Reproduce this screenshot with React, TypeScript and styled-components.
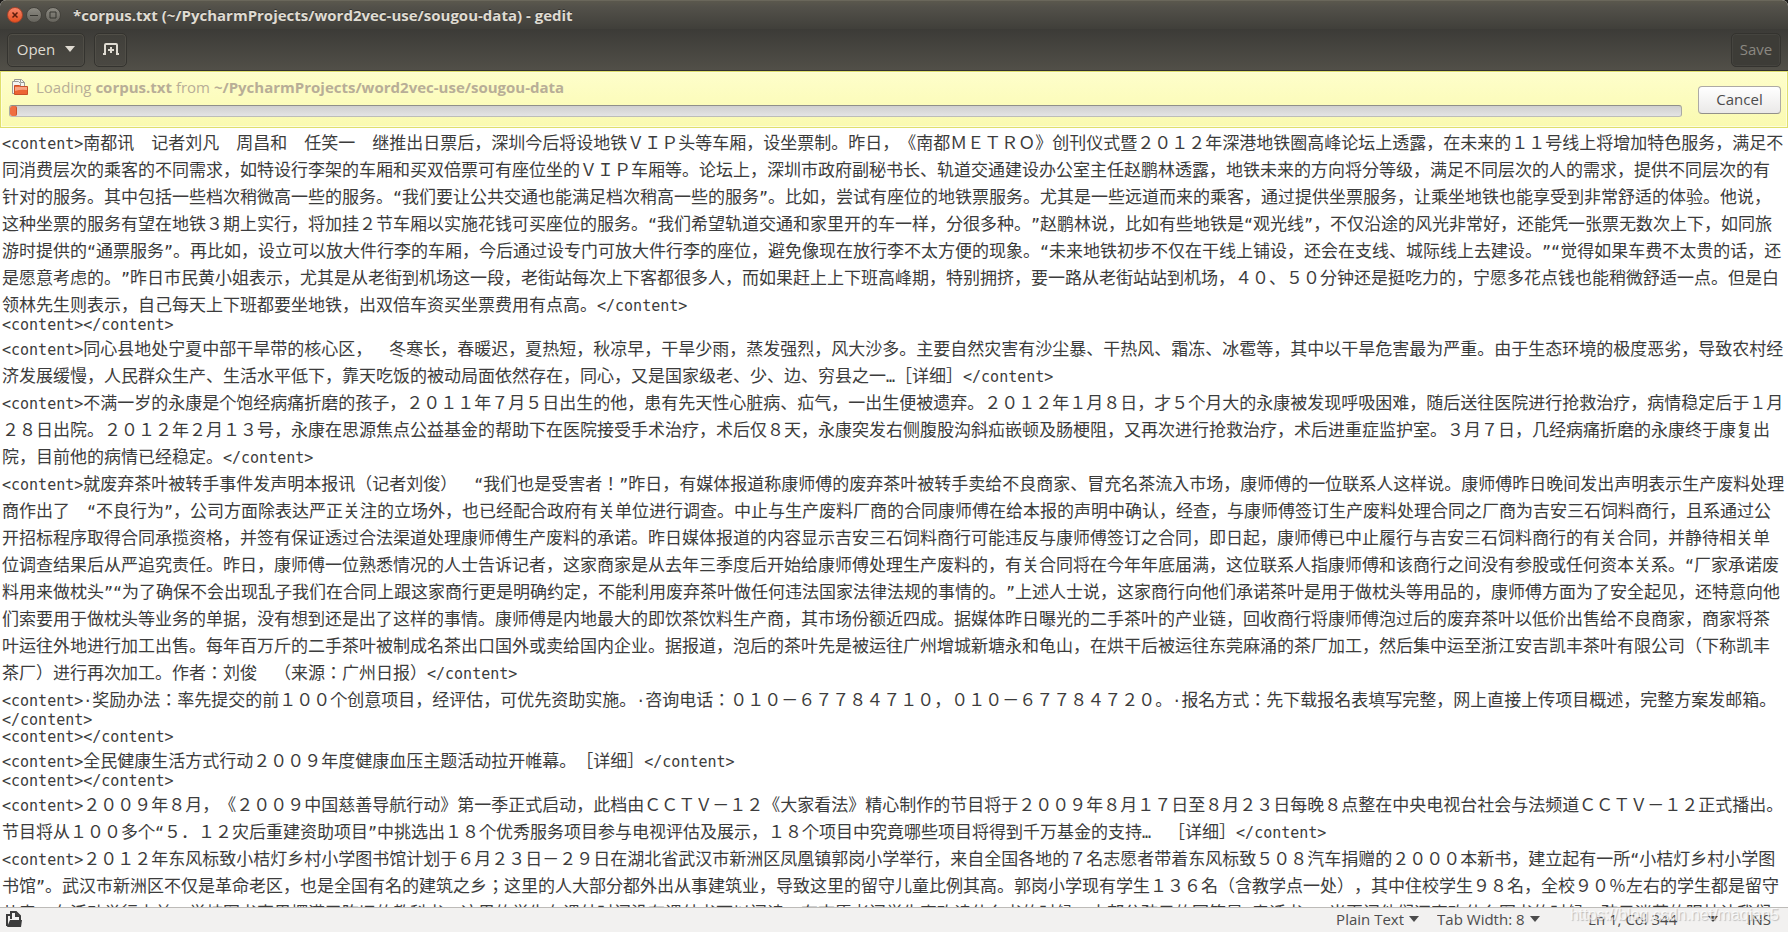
import React from "react";
import styled, { createGlobalStyle } from "styled-components";

const UI_FONT = `"Open Sans", "Noto Sans", sans-serif`;

const GlobalStyle = createGlobalStyle`
  *, *::before, *::after { box-sizing: border-box; }
  body { margin: 0; background: #1a1917; }
  button, select { font: inherit; color: inherit; margin: 0; }
`;

const Window = styled.div`
  display: flex;
  flex-direction: column;
  height: 100vh;
  overflow: hidden;
  border-radius: 6px 6px 0 0;
  background: #fff;
  font-family: ${UI_FONT};
  font-size: 15px;
  line-height: 20px;
`;

const TitleBar = styled.header`
  display: flex;
  flex: none;
  align-items: center;
  gap: 12px;
  height: 29px;
  padding: 0 7px 1px;
  background: linear-gradient(#5b584d, #53514a 20%, #403f3a);
  border-top: 1px solid #6a675b;
`;

const WindowControls = styled.div`
  display: flex;
  gap: 3px;
`;

const ControlButton = styled.button<{ $tone: "close" | "plain" }>`
  display: flex;
  align-items: center;
  justify-content: center;
  width: 16px;
  height: 16px;
  padding: 0;
  border: 1px solid ${(p) => (p.$tone === "close" ? "#a8432a" : "#44423c")};
  border-radius: 50%;
  color: ${(p) => (p.$tone === "close" ? "#5c1d0c" : "#35342f")};
  background: ${(p) =>
    p.$tone === "close"
      ? "linear-gradient(#f6856a, #e6501f)"
      : "linear-gradient(#8c8a82, #66645d)"};
`;

const Title = styled.h1`
  margin: 0;
  font-size: 15px;
  line-height: 20px;
  font-weight: 700;
  color: #dfdbd2;
  text-shadow: 0 -1px 0 #33322e;
`;

const Toolbar = styled.div`
  display: flex;
  flex: none;
  align-items: center;
  gap: 9px;
  height: 42px;
  padding: 0 7px;
  color: #dfdbd2;
  background: linear-gradient(#3c3b37, #514f48);
  border-bottom: 1px solid #33322e;
`;

const ToolButton = styled.button<{ $width: number }>`
  display: flex;
  align-items: center;
  justify-content: center;
  gap: 10px;
  width: ${(p) => p.$width}px;
  height: 34px;
  padding: 0 0 2px;
  border: 1px solid #34332f;
  border-radius: 5px;
  background: linear-gradient(#403f3a, #4a4842);
  box-shadow: inset 0 0 0 1px #504e47;

  &:disabled {
    color: #8b8881;
    background: #3d3c37;
    box-shadow: inset 0 0 0 1px #45443f;
  }
`;

const Spacer = styled.span`
  flex: 1;
`;

const InfoBar = styled.section`
  display: flex;
  flex: none;
  align-items: center;
  gap: 16px;
  height: 57px;
  padding: 0 6px 0 8px;
  border: 1px solid #dfdf6c;
  background: linear-gradient(#fefecb, #fafab0);
  box-shadow: inset 0 0 0 1px #fdfddc;
`;

const Loading = styled.div`
  display: flex;
  flex: 1;
  flex-direction: column;
  align-self: flex-start;
  gap: 8px;
  padding-top: 5px;
`;

const LoadingLabel = styled.label`
  display: flex;
  align-items: center;
  gap: 8px;
  padding-left: 3px;
  color: #b8ae97;
  white-space: pre;
`;

const ProgressTrack = styled.progress`
  display: block;
  appearance: none;
  width: 100%;
  height: 12px;
  border: 1px solid #a9a9a4;
  border-color: #8f8f8b #a9a9a4 #bdbdb8;
  border-radius: 3px;
  overflow: hidden;
  background: linear-gradient(#cfcfcf, #e4e4e4);

  &::-webkit-progress-bar {
    background: transparent;
  }

  &::-webkit-progress-value {
    background: #ef6f42;
    border-right: 1px solid #c9502a;
    border-radius: 2px;
  }
`;

const CancelButton = styled.button`
  width: 83px;
  height: 28px;
  padding: 0 0 2px;
  border: 1px solid #adaaa5;
  border-bottom-color: #92908b;
  border-radius: 4px;
  color: #4c4c4c;
  background: linear-gradient(#fff, #eae9e8);
`;

const Editor = styled.main`
  flex: 1;
  min-height: 0;
  overflow: hidden;
  padding: 0 2px;
  color: #3c3c3c;
  font-family: "DejaVu Sans Mono", monospace;
  font-size: 15px;
  line-height: 17px;
  text-spacing-trim: space-all;
  outline: none;
`;

const Line = styled.p`
  margin: 0;
  white-space: pre-wrap;
`;

const Han = styled.span`
  font-family: "Noto Sans CJK JP", sans-serif;
  font-size: 17px;
  line-height: 27px;
`;

const StatusBar = styled.footer`
  position: relative;
  display: flex;
  flex: none;
  align-items: center;
  height: 25px;
  padding: 0 17px 2px 6px;
  border-top: 1px solid #bdbbb8;
  color: #4c4c4c;
  background: #f2f1f0;
`;

const StatusButton = styled.button`
  display: flex;
  align-items: center;
  padding: 0;
  border: 0;
  background: none;
`;

const StatusGroup = styled.div`
  display: flex;
  align-items: center;
`;

const Picker = styled.label`
  display: flex;
  align-items: center;
  gap: 5px;
  margin-right: 18px;
`;

const PickerSelect = styled.select`
  appearance: none;
  padding: 0;
  border: 0;
  background: none;
  outline: none;
`;

const Position = styled(StatusButton)`
  gap: 31px;
  margin-left: 30px;
  margin-right: 29px;
`;

const Watermark = styled.span`
  position: absolute;
  right: 9px;
  bottom: 8px;
  font-family: "Liberation Sans", sans-serif;
  font-size: 16px;
  line-height: 18px;
  color: rgba(255, 255, 255, 0.75);
  text-shadow: 1px 1px 1px rgba(0, 0, 0, 0.22);
  pointer-events: none;
`;

const Arrow = () => (
  <svg width="10" height="6" viewBox="0 0 10 6" aria-hidden="true">
    <path d="M0 0h10L5 6z" fill="currentColor" />
  </svg>
);

const NewTabIcon = () => (
  <svg width="16" height="12" viewBox="0 0 16 12" fill="none" stroke="currentColor" strokeWidth="2" aria-hidden="true">
    <path d="M0 11h2V2q0-1 1-1h10q1 0 1 1v9h2" />
    <path d="M8 4v6M5 7h6" />
  </svg>
);

const FolderIcon = () => (
  <svg width="16" height="16" viewBox="0 0 16 16" aria-hidden="true">
    <path d="M.5 14.500v-12h2v-2h7l3 3v4h-9v7z" fill="#f4f4f2" stroke="#9a9a95" />
    <path d="M2.500 2.500h4l2 2v3M8.500.5v3h4" fill="none" stroke="#9a9a95" />
    <path d="M2.500 15.500v-9h5l1 1h7v8z" fill="#ec6434" stroke="#c9502a" />
    <path d="M3 8h12v3q-6-1-12 1z" fill="#f8a483" />
  </svg>
);

const PanelIcon = () => (
  <svg width="16" height="16" viewBox="0 0 16 16" aria-hidden="true">
    <path d="M1 15V4h3" fill="none" stroke="#3c3c3c" strokeWidth="2" />
    <path d="M5 8V1h5l4 4v4" fill="none" stroke="#3c3c3c" strokeWidth="2" />
    <path d="M9 1v5h5z" fill="#3c3c3c" />
    <path d="M4 9h12l-1 7H1z" fill="#3c3c3c" />
  </svg>
);

const documentLines = [
  "<content>南都讯　记者刘凡　周昌和　任笑一　继推出日票后，深圳今后将设地铁ＶＩＰ头等车厢，设坐票制。昨日，《南都ＭＥＴＲＯ》创刊仪式暨２０１２年深港地铁圈高峰论坛上透露，在未来的１１号线上将增加特色服务，满足不同消费层次的乘客的不同需求，如特设行李架的车厢和买双倍票可有座位坐的ＶＩＰ车厢等。论坛上，深圳市政府副秘书长、轨道交通建设办公室主任赵鹏林透露，地铁未来的方向将分等级，满足不同层次的人的需求，提供不同层次的有针对的服务。其中包括一些档次稍微高一些的服务。“我们要让公共交通也能满足档次稍高一些的服务”。比如，尝试有座位的地铁票服务。尤其是一些远道而来的乘客，通过提供坐票服务，让乘坐地铁也能享受到非常舒适的体验。他说，这种坐票的服务有望在地铁３期上实行，将加挂２节车厢以实施花钱可买座位的服务。“我们希望轨道交通和家里开的车一样，分很多种。”赵鹏林说，比如有些地铁是“观光线”，不仅沿途的风光非常好，还能凭一张票无数次上下，如同旅游时提供的“通票服务”。再比如，设立可以放大件行李的车厢，今后通过设专门可放大件行李的座位，避免像现在放行李不太方便的现象。“未来地铁初步不仅在干线上铺设，还会在支线、城际线上去建设。”“觉得如果车费不太贵的话，还是愿意考虑的。”昨日市民黄小姐表示，尤其是从老街到机场这一段，老街站每次上下客都很多人，而如果赶上上下班高峰期，特别拥挤，要一路从老街站站到机场，４０、５０分钟还是挺吃力的，宁愿多花点钱也能稍微舒适一点。但是白领林先生则表示，自己每天上下班都要坐地铁，出双倍车资买坐票费用有点高。</content>",
  "<content></content>",
  "<content>同心县地处宁夏中部干旱带的核心区，　冬寒长，春暖迟，夏热短，秋凉早，干旱少雨，蒸发强烈，风大沙多。主要自然灾害有沙尘暴、干热风、霜冻、冰雹等，其中以干旱危害最为严重。由于生态环境的极度恶劣，导致农村经济发展缓慢，人民群众生产、生活水平低下，靠天吃饭的被动局面依然存在，同心，又是国家级老、少、边、穷县之一…［详细］</content>",
  "<content>不满一岁的永康是个饱经病痛折磨的孩子，２０１１年７月５日出生的他，患有先天性心脏病、疝气，一出生便被遗弃。２０１２年１月８日，才５个月大的永康被发现呼吸困难，随后送往医院进行抢救治疗，病情稳定后于１月２８日出院。２０１２年２月１３号，永康在思源焦点公益基金的帮助下在医院接受手术治疗，术后仅８天，永康突发右侧腹股沟斜疝嵌顿及肠梗阻，又再次进行抢救治疗，术后进重症监护室。３月７日，几经病痛折磨的永康终于康复出院，目前他的病情已经稳定。</content>",
  "<content>就废弃茶叶被转手事件发声明本报讯（记者刘俊）　“我们也是受害者！”昨日，有媒体报道称康师傅的废弃茶叶被转手卖给不良商家、冒充名茶流入市场，康师傅的一位联系人这样说。康师傅昨日晚间发出声明表示生产废料处理商作出了　“不良行为”，公司方面除表达严正关注的立场外，也已经配合政府有关单位进行调查。中止与生产废料厂商的合同康师傅在给本报的声明中确认，经查，与康师傅签订生产废料处理合同之厂商为吉安三石饲料商行，且系通过公开招标程序取得合同承揽资格，并签有保证透过合法渠道处理康师傅生产废料的承诺。昨日媒体报道的内容显示吉安三石饲料商行可能违反与康师傅签订之合同，即日起，康师傅已中止履行与吉安三石饲料商行的有关合同，并静待相关单位调查结果后从严追究责任。昨日，康师傅一位熟悉情况的人士告诉记者，这家商家是从去年三季度后开始给康师傅处理生产废料的，有关合同将在今年年底届满，这位联系人指康师傅和该商行之间没有参股或任何资本关系。“厂家承诺废料用来做枕头”“为了确保不会出现乱子我们在合同上跟这家商行更是明确约定，不能利用废弃茶叶做任何违法国家法律法规的事情的。”上述人士说，这家商行向他们承诺茶叶是用于做枕头等用品的，康师傅方面为了安全起见，还特意向他们索要用于做枕头等业务的单据，没有想到还是出了这样的事情。康师傅是内地最大的即饮茶饮料生产商，其市场份额近四成。据媒体昨日曝光的二手茶叶的产业链，回收商行将康师傅泡过后的废弃茶叶以低价出售给不良商家，商家将茶叶运往外地进行加工出售。每年百万斤的二手茶叶被制成名茶出口国外或卖给国内企业。据报道，泡后的茶叶先是被运往广州增城新塘永和龟山，在烘干后被运往东莞麻涌的茶厂加工，然后集中运至浙江安吉凯丰茶叶有限公司（下称凯丰茶厂）进行再次加工。作者：刘俊　（来源：广州日报）</content>",
  "<content>·奖励办法：率先提交的前１００个创意项目，经评估，可优先资助实施。·咨询电话：０１０－６７７８４７１０，０１０－６７７８４７２０。·报名方式：先下载报名表填写完整，网上直接上传项目概述，完整方案发邮箱。</content>",
  "<content></content>",
  "<content>全民健康生活方式行动２００９年度健康血压主题活动拉开帷幕。［详细］</content>",
  "<content></content>",
  "<content>２００９年８月，《２００９中国慈善导航行动》第一季正式启动，此档由ＣＣＴＶ－１２《大家看法》精心制作的节目将于２００９年８月１７日至８月２３日每晚８点整在中央电视台社会与法频道ＣＣＴＶ－１２正式播出。节目将从１００多个“５．１２灾后重建资助项目”中挑选出１８个优秀服务项目参与电视评估及展示，１８个项目中究竟哪些项目将得到千万基金的支持…　［详细］</content>",
  "<content>２０１２年东风标致小桔灯乡村小学图书馆计划于６月２３日－２９日在湖北省武汉市新洲区凤凰镇郭岗小学举行，来自全国各地的７名志愿者带着东风标致５０８汽车捐赠的２０００本新书，建立起有一所“小桔灯乡村小学图书馆”。武汉市新洲区不仅是革命老区，也是全国有名的建筑之乡；这里的人大部分都外出从事建筑业，导致这里的留守儿童比例其高。郭岗小学现有学生１３６名（含教学点一处），其中住校学生９８名，全校９０％左右的学生都是留守儿童。在活动举行之前，学校图书室里摆满了陈旧的教科书，这里的学生在课外时间没有课外书可以阅读。有志愿者问学生喜欢读什么书的时候，大部分孩子的回答是“童话书”。当再问他们还喜欢什么图书的时候，孩子迷茫的眼神让我们",
];

/* Narrow characters use the monospace face, everything else the Han face. */
const splitRuns = (text: string) => text.split(/([\x20-\x7e“”·…]+)/).filter(Boolean);
const isNarrow = (run: string) => /^[\x20-\x7e“”·…]/.test(run);

const DocumentLine = ({ text }: { text: string }) => (
  <Line>
    {splitRuns(text).map((run, i) =>
      isNarrow(run) ? <React.Fragment key={i}>{run}</React.Fragment> : <Han key={i}>{run}</Han>
    )}
  </Line>
);

export default function App() {
  return (
    <>
      <GlobalStyle />
      <Window>
        <TitleBar>
          <WindowControls>
            <ControlButton $tone="close" aria-label="Close">
              <svg width="8" height="8" viewBox="0 0 8 8" stroke="currentColor" strokeWidth="1.500">
                <path d="M1.500 1.500l5 5M6.500 1.500l-5 5" />
              </svg>
            </ControlButton>
            <ControlButton $tone="plain" aria-label="Minimize">
              <svg width="8" height="8" viewBox="0 0 8 8" stroke="currentColor">
                <path d="M0 4.500h8" />
              </svg>
            </ControlButton>
            <ControlButton $tone="plain" aria-label="Maximize">
              <svg width="8" height="8" viewBox="0 0 8 8" stroke="currentColor" fill="none">
                <path d="M1 1h6v6h-6z" />
              </svg>
            </ControlButton>
          </WindowControls>
          <Title>*corpus.txt (~/PycharmProjects/word2vec-use/sougou-data) - gedit</Title>
        </TitleBar>
        <Toolbar>
          <ToolButton $width={78} aria-haspopup="menu">
            Open
            <Arrow />
          </ToolButton>
          <ToolButton $width={33} aria-label="New tab">
            <NewTabIcon />
          </ToolButton>
          <Spacer />
          <ToolButton $width={50} disabled>
            Save
          </ToolButton>
        </Toolbar>
        <InfoBar>
          <Loading>
            <LoadingLabel htmlFor="load-progress">
              <FolderIcon />
              <span>
                Loading <b>corpus.txt</b> from <b>~/PycharmProjects/word2vec-use/sougou-data</b>
              </span>
            </LoadingLabel>
            <ProgressTrack id="load-progress" max={1000} value={4} />
          </Loading>
          <CancelButton>Cancel</CancelButton>
        </InfoBar>
        <Editor lang="ja" role="textbox" aria-multiline="true" aria-label="corpus.txt" tabIndex={0}>
          {documentLines.map((text, i) => (
            <DocumentLine key={i} text={text} />
          ))}
        </Editor>
        <StatusBar>
          <StatusButton aria-label="Toggle panel">
            <PanelIcon />
          </StatusButton>
          <Spacer />
          <StatusGroup>
            <Picker>
              <PickerSelect aria-label="Highlight mode" defaultValue="plain">
                <option value="plain">Plain Text</option>
              </PickerSelect>
              <Arrow />
            </Picker>
            <Picker>
              <PickerSelect aria-label="Tab width" defaultValue="8">
                <option value="8">Tab Width: 8</option>
              </PickerSelect>
              <Arrow />
            </Picker>
            <Position aria-haspopup="menu">
              Ln 1, Col 344
              <Arrow />
            </Position>
            <span>INS</span>
          </StatusGroup>
          <Watermark>https://blog.csdn.net/maqian5</Watermark>
        </StatusBar>
      </Window>
    </>
  );
}
